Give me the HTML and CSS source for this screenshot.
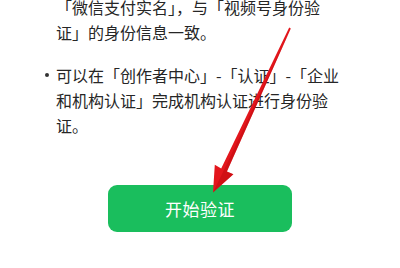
FILE: index.html
```html
<!doctype html>
<html lang="zh-CN">
  <head>
    <meta charset="utf-8">
    <meta name="viewport" content="width=device-width, initial-scale=1" />
    <title>开始验证</title>
    <link rel="stylesheet" href="styles.css">
  </head>
  <body>
    <div class="page">
      <div class="notes">
        <p class="cont">「微信支付实名」，与「视频号身份验证」的身份信息一致。</p>
        <ul class="list">
          <li>可以在「创作者中心」-「认证」-「企业和机构认证」完成机构认证进行身份验证。</li>
        </ul>
      </div>
      <div class="actions">
        <button class="start">开始验证</button>
      </div>

      <!-- red pointer drawn over the page -->
      <svg class="pointer" width="400" height="268" viewBox="0 0 400 268">
        <polygon points="289.2,27.6 290.8,28.4 226.9,171.6 233.4,174.2 213,192.5 214.8,164.8 221.2,168.4" fill="#e3161c"/>
        <polygon points="290.8,28.4 226.9,171.6 233.4,174.2 213,192.5 224,170" fill="#b8080e" opacity="0.45"/>
      </svg>
    </div>
  </body>
</html>
```

FILE: styles.css
```css
*, *::before, *::after {
    box-sizing: border-box;
}

body,
p,
ul {
    margin: 0;
}

body {
    background: #fff;
    overflow: hidden;
    font-family: "Noto Sans CJK SC", "Noto Sans", sans-serif;
    color: #262626;
}

.page {
    position: relative;
    width: 400px;
    height: 268px;
    overflow: hidden;
}

.notes {
    margin-top: -5.5px;
    padding-left: 56px;
    width: 340px;
    font-size: 16px;
    line-height: 25px;
}

.list {
    list-style: none;
    padding: 0;
    margin-top: 18px;
}

.list li {
    position: relative;
}

.list li::before {
    content: "";
    position: absolute;
    left: -11px;
    top: 10px;
    width: 4px;
    height: 4px;
    border-radius: 50%;
    background: #333;
}

.actions {
    display: flex;
    justify-content: center;
    margin-top: 47.5px;
}

.start {
    width: 184px;
    height: 47px;
    border: 0;
    border-radius: 9px;
    background: #1abe5d;
    color: #fff;
    font-family: "Noto Sans CJK SC", "Noto Sans", sans-serif;
    font-size: 17px;
    letter-spacing: 0.5px;
}

.pointer {
    position: absolute;
    left: 0;
    top: 0;
}
```
